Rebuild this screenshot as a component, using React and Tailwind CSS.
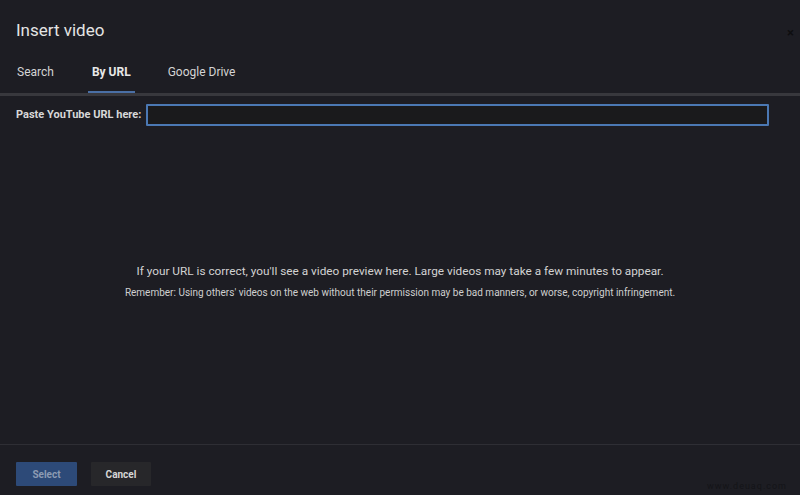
import React from "react";

export default function App() {
  return (
    <div className="w-[800px] h-[495px] bg-[#1d1d23] flex flex-col font-['Roboto',sans-serif] text-[#d6d6d6] relative overflow-hidden">
      <div className="flex items-start justify-between pl-4 pr-[6px] pt-[18px]">
        <h1 className="text-[17px] leading-[24px] text-[#e4e4e4]">Insert video</h1>
        <span className="text-[13px] leading-none text-[#0e0e10] mt-[8px] font-bold">×</span>
      </div>
      <div className="flex pl-[13px] mt-[17px] h-[34px] items-stretch text-[12px]">
        <div className="px-[4px] pt-[4px] border-b-[2px] border-transparent text-[#d4d4d4]">Search</div>
        <div className="px-[4px] pt-[4px] ml-[30px] border-b-[2px] border-[#4a6fa5] font-bold text-[#e8e8e8]">By URL</div>
        <div className="px-[4px] pt-[4px] ml-[29px] border-b-[2px] border-transparent text-[#d4d4d4]">Google Drive</div>
      </div>
      <div className="h-[3px] bg-[#38383d]" />
      <div className="flex items-center pl-4 pr-[31px] mt-[8px]">
        <span className="text-[11px] font-bold text-[#d8d8d8] mr-[5px] whitespace-nowrap">Paste YouTube URL here:</span>
        <div className="flex-1 h-[22px] border-[2px] border-[#4b78b3] bg-[#1a1a1c] rounded-[1px]" />
      </div>
      <div className="flex-1 flex flex-col items-center pt-[137px]">
        <p className="text-[11.8px] text-[#d2d2d2] leading-[16px]">
          If your URL is correct, you'll see a video preview here. Large videos may take a few minutes to appear.
        </p>
        <p className="text-[10px] text-[#cfcfcf] mt-[8px] leading-[12px]">
          Remember: Using others' videos on the web without their permission may be bad manners, or worse, copyright infringement.
        </p>
      </div>
      <div className="h-[1px] bg-[#2e2e34]" />
      <div className="flex items-center gap-[14px] pl-4 pt-[17px] pb-[9px]">
        <button className="w-[61px] h-[24px] bg-[#2d4a78] text-[#8c9bb3] text-[10px] font-bold rounded-[1px]">Select</button>
        <button className="w-[60px] h-[24px] bg-[#27272a] text-[#d6d6d6] text-[10px] font-bold rounded-[1px]">Cancel</button>
      </div>
      <span className="absolute right-[13px] bottom-[2px] text-[9px] text-[#141418] tracking-[1px]">www.deuaq.com</span>
    </div>
  );
}
